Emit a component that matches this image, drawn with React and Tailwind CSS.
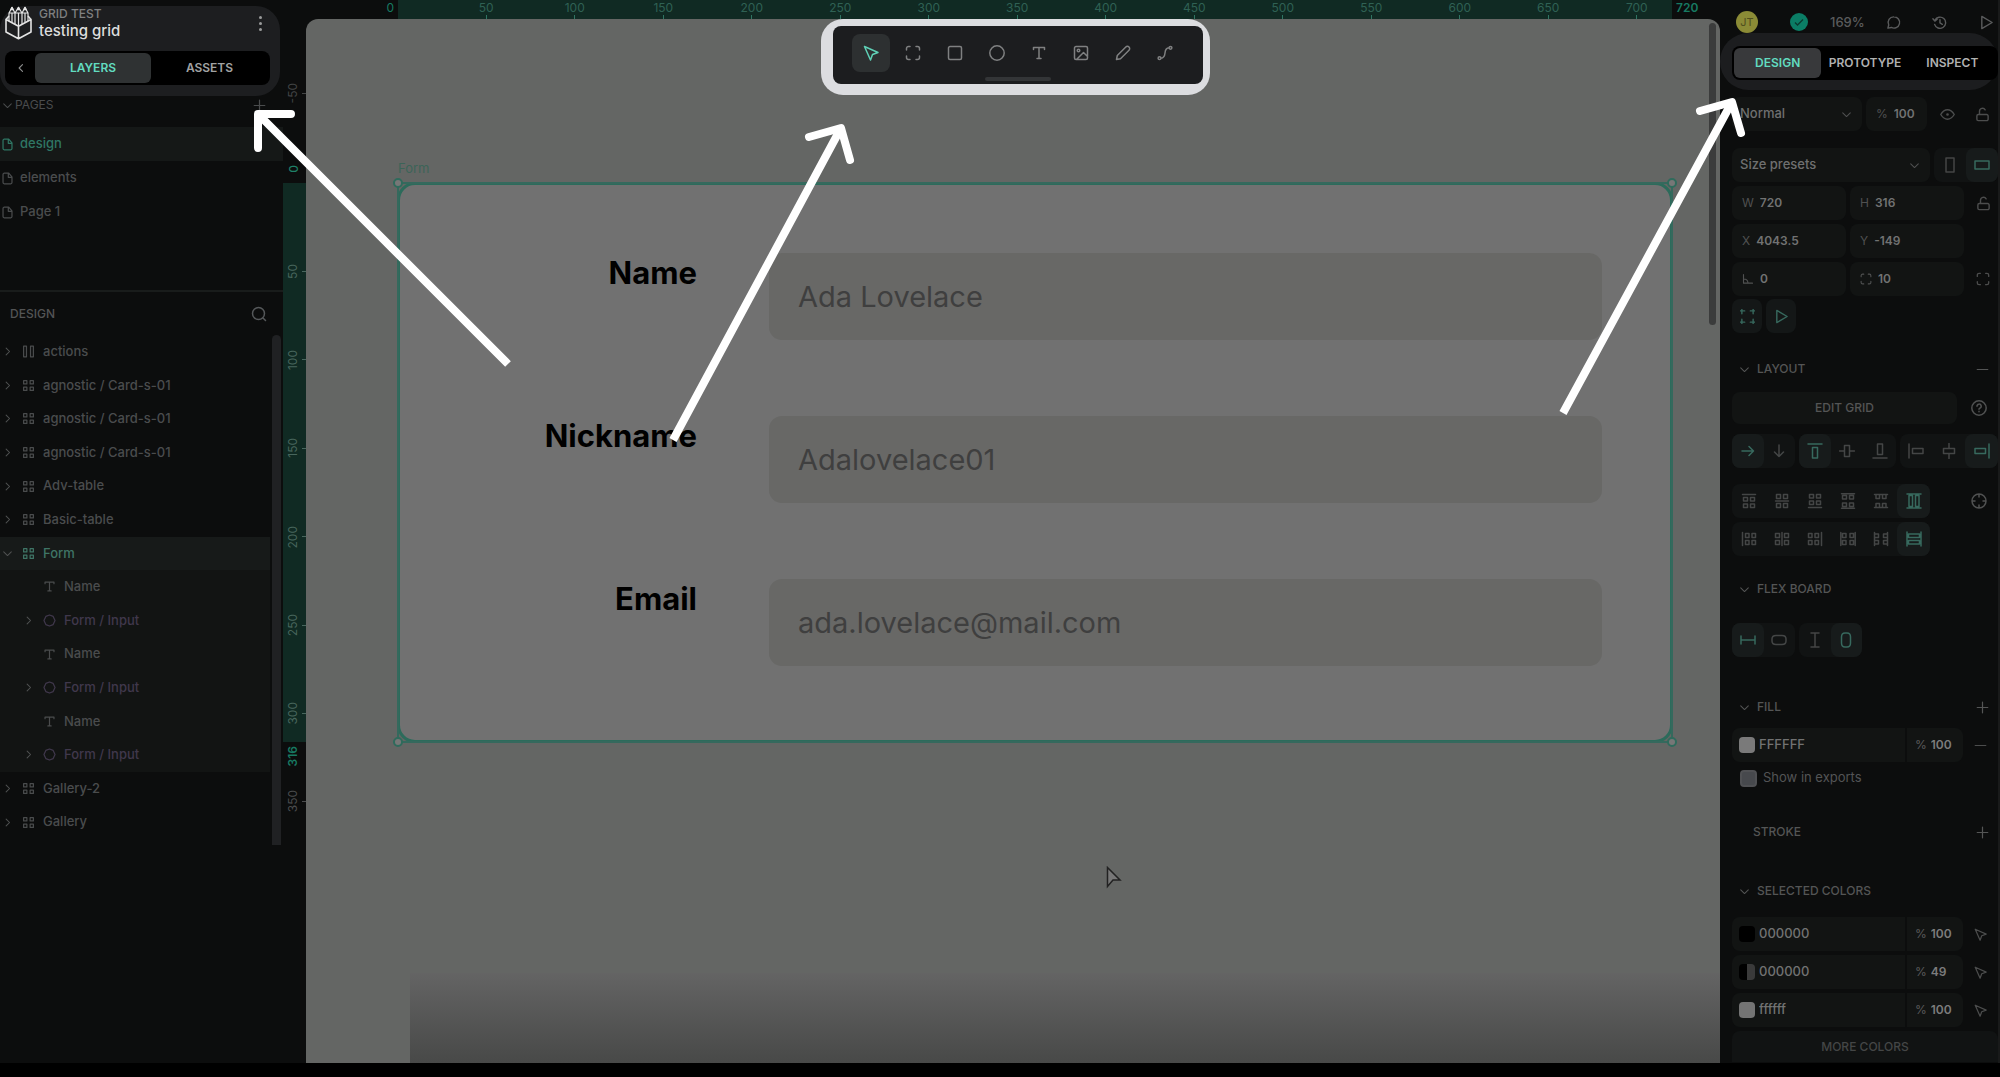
import { useState } from 'react';
import clsx from 'clsx';

const PATHS = {
  chevronLeft: 'M10 3.5 5.5 8l4.5 4.5',
  chevronRight: 'M6 3 11 8 6 13',
  chevronDown: 'M2.5 5.5 8 11l5.500-5.500',
  plus: 'M8 1.5v13M1.5 8h13',
  minus: 'M1.5 8h13',
  search: 'M7.5 1.5a6 6 0 1 0 0 12 6 6 0 0 0 0-12zM12 12l2.5 2.5',
  page: 'M9.5 1.5H4A1.5 1.5 0 0 0 2.5 3v10A1.5 1.5 0 0 0 4 14.5h8a1.5 1.5 0 0 0 1.5-1.5V6zM9 1.5V6.5h4.5',
  columns: 'M2 1.5h3.5v13H2zM10.5 1.5H14v13h-3.5z',
  grid: 'M2 2h4v4H2zM10 2h4v4h-4zM2 10h4v4H2zM10 10h4v4h-4z',
  text: 'M2.5 4.5v-2h11v2M8 2.5v11M6 13.5h4',
  component: 'M8 1.2 12.5 3 14.8 8 12.5 13 8 14.8 3.5 13 1.2 8 3.5 3z',
  move: 'M1.5 1.5 15 7.5 9.5 9.5 7.5 15z',
  board: 'M5 1.5H3.5a2 2 0 0 0-2 2V5M11 1.5h1.5a2 2 0 0 1 2 2V5M14.5 11v1.5a2 2 0 0 1-2 2H11M5 14.5H3.5a2 2 0 0 1-2-2V11',
  rect: 'M3 1.5h10A1.5 1.5 0 0 1 14.5 3v10a1.5 1.5 0 0 1-1.5 1.5H3A1.5 1.5 0 0 1 1.5 13V3A1.5 1.5 0 0 1 3 1.5z',
  ellipse: 'M8 .8a7.2 7.2 0 1 0 0 14.4A7.2 7.2 0 0 0 8 .8z',
  image: 'M3 1.5h10A1.5 1.5 0 0 1 14.5 3v10a1.5 1.5 0 0 1-1.5 1.5H3A1.5 1.5 0 0 1 1.5 13V3A1.5 1.5 0 0 1 3 1.5zM5.5 4.2a1.3 1.3 0 1 0 0 2.6 1.3 1.3 0 0 0 0-2.6zM3.5 14.5 10.5 7.5l4 4',
  pencil: 'M1.5 14.5l.8-4L10.8 2a2.2 2.2 0 0 1 3.2 3.2l-8.5 8.5z',
  path: 'M2.5 11.8a1.4 1.4 0 1 0 0 2.8 1.4 1.4 0 0 0 0-2.8zM13.5 1.4a1.4 1.4 0 1 0 0 2.8 1.4 1.4 0 0 0 0-2.8zM4 13.2C11 13 5 3 12 2.8',
  comment: 'M8.5 2a6 6 0 1 1-2.8 11.3L2 14l.9-3.3A6 6 0 0 1 8.5 2z',
  history: 'M3.2 5.5A6 6 0 1 1 2.8 10M1 4l2 2.5L5.5 4.5M8.5 5v3.5l2.5 1.5',
  play: 'M3 1.5 14 8 3 14.5z',
  eye: 'M.8 8C3 4.5 5.3 3 8 3s5 1.5 7.2 5C13 11.5 10.7 13 8 13S3 11.5.8 8zM8 7.3a.7.7 0 1 0 0 1.4.7.7 0 0 0 0-1.4z',
  unlock: 'M3.5 8h9A1.5 1.5 0 0 1 14 9.5v3.5a1.5 1.5 0 0 1-1.5 1.5h-9A1.5 1.5 0 0 1 2 13V9.5A1.5 1.5 0 0 1 3.5 8zM4.8 8V4.5a3.2 3.2 0 0 1 6-1.5',
  portrait: 'M4 1h8v14H4z',
  landscape: 'M1 4h14v8H1z',
  angle: 'M2 2v11.5h12M2.5 8c3 0 5 2 5.5 5',
  fit: 'M2 5V2h3M11 2h3v3M14 11v3h-3M5 14H2v-3M.5 2h1M2 .5v1M14.5 2h1M14 .5v1M.5 14h1M2 14.5v1M14.5 14h1M14 14.5v1',
  right: 'M2 8h11.5M9 3.5 13.5 8 9 12.5',
  down: 'M8 2v11.5M3.5 9 8 13.5 12.5 9',
  alignTop: 'M1 1h14M5.5 4.5h5v10.5h-5z',
  alignMiddle: 'M.5 8h5M10.5 8h5M5.5 2.5h5v11h-5z',
  alignBottom: 'M1 15h14M5.5 1h5v10.5h-5z',
  help: 'M8 .8a7.2 7.2 0 1 0 0 14.4A7.2 7.2 0 0 0 8 .8zM6 6.3A2.1 2.1 0 1 1 8.8 8.2Q8 8.6 8 9.3M8 11.2v.6',
  locate: 'M8 1a7 7 0 1 0 0 14A7 7 0 0 0 8 1zM8 1v3M8 12v3M1 8h3M12 8h3',
  fixWidth: 'M1 4v8M15 4v8M1 8h14',
  fitWidth: 'M5 3.5h6q4 0 4 3.5v2q0 3.500-4 3.500H5Q1 12.500 1 9V7q0-3.500 4-3.500z',
  packStart: 'M1.5 1.5h13M2.5 4.5h4v3.5h-4zM9.5 4.5h4v3.5h-4zM2.5 11h4v3.5h-4zM9.5 11h4v3.5h-4z',
  packCenter: 'M1.5 8h13M2.5 1.5h4v4h-4zM9.5 1.5h4v4h-4zM2.5 10.5h4v4h-4zM9.5 10.5h4v4h-4z',
  packEnd: 'M1.5 14.5h13M2.5 1.5h4v3.5h-4zM9.5 1.5h4v3.5h-4zM2.5 8h4v3.5h-4zM9.5 8h4v3.5h-4z',
  packBetween: 'M1.5.8h13M1.5 15.2h13M2.5 2.5h4v3.5h-4zM9.5 2.5h4v3.5h-4zM2.5 10h4v3.5h-4zM9.5 10h4v3.5h-4z',
  packAround: 'M1.5 1.5h13M1.5 14.5h13M3 1.5v4h3.5v-4M9.5 1.5v4H13v-4M3 14.5v-4h3.5v4M9.5 14.5v-4H13v4',
  packStretch: 'M1 1h14M1 15h14M3 2.5h3.5v11H3zM9.5 2.5H13v11H9.5z',
};

function Icon({ name, size = 16, flip = false, className }) {
  return (
    <svg
      width={size}
      height={size}
      viewBox="0 0 16 16"
      fill="none"
      stroke="currentColor"
      strokeWidth="1.5"
      strokeLinecap="round"
      strokeLinejoin="round"
      className={clsx('shrink-0', className)}
      aria-hidden="true"
    >
      {/* flip swaps the axes, for the horizontal twin of an icon */}
      <path d={PATHS[name]} transform={flip ? 'matrix(0 1 1 0 0 0)' : undefined} />
    </svg>
  );
}

const pages = ['design', 'elements', 'Page 1'];

const layers = [
  { name: 'actions', icon: 'columns' },
  { name: 'agnostic / Card-s-01', icon: 'grid' },
  { name: 'agnostic / Card-s-01', icon: 'grid' },
  { name: 'agnostic / Card-s-01', icon: 'grid' },
  { name: 'Adv-table', icon: 'grid' },
  { name: 'Basic-table', icon: 'grid' },
  { name: 'Form', icon: 'grid', selected: true },
  { name: 'Name', icon: 'text', child: true },
  { name: 'Form / Input', icon: 'component', child: true },
  { name: 'Name', icon: 'text', child: true },
  { name: 'Form / Input', icon: 'component', child: true },
  { name: 'Name', icon: 'text', child: true },
  { name: 'Form / Input', icon: 'component', child: true },
  { name: 'Gallery-2', icon: 'grid' },
  { name: 'Gallery', icon: 'grid' },
];

const tools = ['move', 'board', 'rect', 'ellipse', 'text', 'image', 'pencil', 'path'];

const rulerX = [50, 100, 150, 200, 250, 300, 350, 400, 450, 500, 550, 600, 650, 700];
const rulerY = [50, 100, 150, 200, 250, 300];

const formFields = [
  { id: 'name', label: 'Name', value: 'Ada Lovelace' },
  { id: 'nickname', label: 'Nickname', value: 'Adalovelace01' },
  { id: 'email', label: 'Email', value: 'ada.lovelace@mail.com' },
];

const selectedColors = [
  { hex: '000000', opacity: '100', swatch: 'bg-black' },
  { hex: '000000', opacity: '49', swatch: 'bg-linear-to-r from-black from-50% to-[#3a3a3a] to-50%' },
  { hex: 'ffffff', opacity: '100', swatch: 'bg-[#747474]' },
];

function Logo() {
  return (
    <svg width="28" height="34" viewBox="0 0 28 34" fill="none" stroke="#e4e4e4" strokeWidth="1.6" strokeLinejoin="round" aria-label="Penpot">
      <path d="M1 13.5v12.5l12.5 6.8L26 26V13.5l-12.5 6.7zM13.5 20.2v12.6" />
      <path d="M1 13.5l3-3.5M26 13.5l-3-3.5" />
      <path d="M4 15V7l3-5.5L10 7v11M10 7l3.5-5.5L17 7v11M17 7l3-5.5L23 7v8M4 7h19M7 7v9.5M13.5 7v13M20 7v9.5" strokeWidth="1.2" />
      <path d="M6 3.5 7 1.5l1 2zM12.5 3.5l1-2 1 2zM19 3.5l1-2 1 2z" fill="#e4e4e4" />
    </svg>
  );
}

function LayerRow({ layer }) {
  const { name, icon, selected, child } = layer;
  const isComponent = icon === 'component';
  return (
    <li
      className={clsx(
        'flex min-h-0 flex-1 text-[13px] font-medium',
        selected && 'bg-[#171a19] text-[#3f7566]',
        child && 'bg-[#121413] pl-[21px]',
        isComponent ? 'text-[#40384c]' : !selected && 'text-[#4a4c4d]'
      )}
    >
      <button className="flex flex-1 items-center text-left">
        <span className="flex w-[15px] justify-center text-[#505252]">
          {icon !== 'text' && <Icon name={selected ? 'chevronDown' : 'chevronRight'} size={11} />}
        </span>
        <span className="flex w-[26px] justify-center">
          <Icon name={icon} size={13} />
        </span>
        <span className="ml-0.5">{name}</span>
      </button>
    </li>
  );
}

function LeftPanel() {
  const [tab, setTab] = useState('layers');
  return (
    <aside className="flex w-[283px] shrink-0 flex-col bg-[#0c0d0d]">
      <header className="mt-1.5 mr-[3px] h-[90px] rounded-[24px] bg-[#1d1e20] pr-2.5 pl-[5px]">
        <div className="flex h-[45px] items-start">
          <Logo />
          <div className="ml-1.5 flex-1">
            <p className="text-xs leading-[15px] font-medium text-[#7f8081]">GRID TEST</p>
            <h1 className="text-[15px] leading-5 font-medium text-[#dcdddd]">testing grid</h1>
          </div>
          <button className="mt-2.5 mr-1 flex flex-col items-center gap-[3px] px-1 text-[#9a9b9b]" aria-label="Menu">
            <span className="size-[3px] rounded-full bg-current"></span>
            <span className="size-[3px] rounded-full bg-current"></span>
            <span className="size-[3px] rounded-full bg-current"></span>
          </button>
        </div>
        <div className="flex h-[34px] items-stretch rounded-lg bg-black p-0.5 text-xs font-semibold">
          <button className="flex w-7 items-center justify-center text-[#8c8d8d]" aria-label="Collapse">
            <Icon name="chevronLeft" size={12} />
          </button>
          <button
            onClick={() => setTab('layers')}
            className={clsx('w-[116px] rounded-md', tab === 'layers' ? 'bg-[#2f3233] text-[#62dcc0]' : 'text-[#a2a3a3]')}
          >
            LAYERS
          </button>
          <button
            onClick={() => setTab('assets')}
            className={clsx('flex-1 rounded-md', tab === 'assets' ? 'bg-[#2f3233] text-[#62dcc0]' : 'text-[#a2a3a3]')}
          >
            ASSETS
          </button>
        </div>
      </header>

      {/* Pages */}
      <section className="flex h-[196px] flex-col border-b-2 border-[#191c1b] text-[#4a4c4d]">
        <div className="flex h-[31px] items-start justify-between pr-[17px] pl-0.5">
          <button className="flex h-[18px] items-center gap-0.5 text-xs">
            <Icon name="chevronDown" size={11} />
            PAGES
          </button>
          <button className="flex h-[18px] items-center" aria-label="Add page">
            <Icon name="plus" size={13} />
          </button>
        </div>
        <ul>
          {pages.map((page, i) => (
            <li key={page} className={i === 0 ? 'bg-[#151817] text-[#2f7664]' : ''}>
              <button className="flex h-[34px] w-full items-center gap-1.5 pl-px text-[13px] font-medium">
                <Icon name="page" size={13} />
                {page}
              </button>
            </li>
          ))}
        </ul>
      </section>

      {/* Layers */}
      <div className="flex h-[43px] shrink-0 items-center justify-between pr-4 pl-2.5 text-[#535455]">
        <h2 className="text-xs font-medium">DESIGN</h2>
        <button aria-label="Search layers" className="text-[#55585a]">
          <Icon name="search" size={16} />
        </button>
      </div>
      <div className="flex">
        <ul className="flex h-[504px] flex-1 flex-col">
          {layers.map((layer, i) => (
            <LayerRow key={i} layer={layer} />
          ))}
        </ul>
        <div className="mx-0.5 h-[510px] w-[9px] rounded-t-full bg-[#202123]"></div>
      </div>
    </aside>
  );
}

function Ruler() {
  return (
    <div className="flex h-[19px] text-xs leading-[15px] text-[#2f6154]">
      <div className="w-[115px] pr-1 text-right text-[#177a62]">0</div>
      <div className="flex flex-1 bg-[#102a23] pl-11">
        <div className="-mr-[9px] flex flex-1">
          {rulerX.map((mark) => (
            <div key={mark} className="flex flex-1 flex-col items-center">
              {mark}
              <span className="h-1 w-px bg-[#2f7563]"></span>
            </div>
          ))}
        </div>
      </div>
      <div className="w-12 pl-1 font-semibold text-[#177a62]">720</div>
    </div>
  );
}

function SideRuler() {
  return (
    <div className="flex w-[23px] shrink-0 flex-col text-xs leading-[14px] text-[#48665d]">
      <div className="flex h-[164px] flex-col items-center justify-between pt-16 pb-2.5">
        <div className="flex w-full items-center justify-between pl-[3px] text-[#434546]">
          <span className="rotate-180 [writing-mode:vertical-rl]">-50</span>
          <span className="h-px w-1 bg-current"></span>
        </div>
        <span className="-ml-0.5 rotate-180 font-medium text-[#1f8068] [writing-mode:vertical-rl]">0</span>
      </div>
      <div className="h-[559px] bg-[#102a23] pt-11">
        <div className="flex h-[531px] flex-col">
          {rulerY.map((mark) => (
            <div key={mark} className="flex flex-1 items-center justify-between pl-[3px]">
              <span className="rotate-180 [writing-mode:vertical-rl]">{mark}</span>
              <span className="h-px w-1 bg-current"></span>
            </div>
          ))}
        </div>
      </div>
      <span className="mt-1 ml-[3px] w-[14px] rotate-180 font-semibold text-[#177a62] [writing-mode:vertical-rl]">316</span>
      <div className="mt-6 flex items-center justify-between pl-[3px] text-[#4a4c4d]">
        <span className="rotate-180 [writing-mode:vertical-rl]">350</span>
        <span className="h-px w-1 bg-current"></span>
      </div>
    </div>
  );
}

function Toolbar() {
  const [active, setActive] = useState('move');
  return (
    <div className="absolute top-0 left-[515px] rounded-[22px] bg-[#dcdde0] pt-[7px] pr-[7px] pb-[11px] pl-3">
      <div className="flex h-[58px] w-[370px] flex-col items-center rounded-lg bg-[#1c1d1f] pt-2">
        <div className="flex gap-1">
          {tools.map((tool) => (
            <button
              key={tool}
              aria-label={tool}
              onClick={() => setActive(tool)}
              className={clsx(
                'flex size-[38px] items-center justify-center rounded-lg',
                tool === active ? 'bg-[#2d3031] text-[#5fd0b6]' : 'text-[#7f8081]'
              )}
            >
              <Icon name={tool} size={16} />
            </button>
          ))}
        </div>
        <div className="mt-[5px] h-1 w-[66px] rounded-full bg-[#333537]"></div>
      </div>
    </div>
  );
}

function Handle({ className }) {
  return <span className={clsx('absolute size-2.5 rounded-full border-2 border-[#2f6b5c] bg-[#777]', className)}></span>;
}

function Canvas() {
  return (
    <div className="relative flex flex-1 flex-col overflow-hidden rounded-t-xl bg-[#646664]">
      <div className="mt-[140px] mr-[47px] ml-[91px]">
        <p className="mb-[5px] pl-px text-[13px] leading-[18px] text-[#3c6458]">Form</p>
        <div className="relative h-[561px]">
          <div className="h-full rounded-[18px] border-[3px] border-[#2c6b5b] bg-[#717171] pt-[68px] pr-[68px]">
            {formFields.map((field) => (
              <div key={field.id} className="mb-19 flex items-start">
                <label htmlFor={field.id} className="mr-18 w-[297px] text-right text-[31px] leading-10 font-bold text-black">
                  {field.label}
                </label>
                <input
                  id={field.id}
                  defaultValue={field.value}
                  className="h-[87px] min-w-0 flex-1 rounded-[13px] bg-[#686866] px-[29px] text-[29px] text-[#3f3f3f]"
                />
              </div>
            ))}
          </div>
          <div className="pointer-events-none absolute inset-0 border-2 border-[#35695d]"></div>
          <Handle className="-top-1 -left-1" />
          <Handle className="-top-1 -right-1" />
          <Handle className="-bottom-1 -left-1" />
          <Handle className="-right-1 -bottom-1" />
        </div>
      </div>
      <div className="mt-auto ml-[104px] h-[90px] bg-linear-to-b from-[#646464] to-[#484948]"></div>

      {/* Scrollbar */}
      <div className="absolute top-1 right-1 h-[302px] w-[7px] rounded-full bg-[#3b3c3c]"></div>

      <Toolbar />

      <svg className="absolute top-[847px] left-[800px]" width="16" height="24" viewBox="0 0 16 24" fill="#777" stroke="#222" strokeWidth="1.5" aria-hidden="true">
        <path d="M1.5 1.5 14 14H7L1.5 20.5z" />
      </svg>
    </div>
  );
}

function Field({ label, icon, value, className }) {
  return (
    <label className={clsx('flex h-[34px] items-center gap-1.5 rounded-lg bg-[#121413] px-2.5', className)}>
      <span className="text-xs text-[#505151]">{icon ? <Icon name={icon} size={12} /> : label}</span>
      <input
        defaultValue={value}
        aria-label={label}
        className="w-full min-w-0 bg-transparent text-xs font-semibold text-[#717272]"
      />
    </label>
  );
}

function SelectField({ value, className }) {
  return (
    <div className={clsx('relative flex h-[34px] items-center rounded-lg bg-[#121413]', className)}>
      <select aria-label={value} className="w-full appearance-none bg-transparent px-2 text-[13px] font-medium text-[#6f7070]">
        <option>{value}</option>
      </select>
      <Icon name="chevronDown" size={11} className="pointer-events-none absolute right-2.5 text-[#505151]" />
    </div>
  );
}

function IconButton({ name, className, size = 15 }) {
  return (
    <button aria-label={name} className={clsx('flex h-[34px] items-center justify-center text-[#4c4d4d]', className)}>
      <Icon name={name} size={size} />
    </button>
  );
}

function ButtonGroup({ icons, active, flip = false, className }) {
  return (
    <div className={clsx('flex h-[34px] rounded-lg bg-[#111313]', className)}>
      {icons.map((icon) => {
        const [name, turned] = icon.split(':');
        return (
          <button
            key={icon}
            aria-label={icon}
            className={clsx(
              'flex flex-1 items-center justify-center rounded-lg',
              icon === active ? 'bg-[#171b1b] text-[#37695e]' : 'text-[#444646]'
            )}
          >
            <Icon name={name} size={16} flip={flip || turned === 'h'} />
          </button>
        );
      })}
    </div>
  );
}

function SectionTitle({ title, action, className }) {
  return (
    <div className={clsx('flex h-8 items-center pl-[7px] text-[#545555]', className)}>
      {title !== 'STROKE' && <Icon name="chevronDown" size={11} className="mr-[7px]" />}
      <h3 className={clsx('flex-1 text-xs font-medium', title === 'STROKE' && 'pl-3.5')}>{title}</h3>
      {action && (
        <button aria-label={action} className="mr-[9px]">
          <Icon name={action} size={13} />
        </button>
      )}
    </div>
  );
}

function ColorRow({ hex, opacity, swatch, action, className }) {
  return (
    <div className={clsx('flex', className)}>
      <div className="flex h-[34px] w-[173px] items-center rounded-l-lg bg-[#121413] pl-[7px]">
        <span className={clsx('size-4 shrink-0 rounded-sm', swatch)}></span>
        <input
          defaultValue={hex}
          aria-label="Color"
          className="ml-1 w-full min-w-0 bg-transparent text-[13px] font-medium text-[#717272]"
        />
      </div>
      <label className="ml-0.5 flex h-[34px] w-14 items-center gap-1 rounded-r-lg bg-[#121413] pl-2 text-xs text-[#5a5b5b]">
        %
        <input
          defaultValue={opacity}
          aria-label="Opacity"
          className="w-full min-w-0 bg-transparent text-xs font-semibold text-[#7c7c7c]"
        />
      </label>
      <IconButton name={action} className="flex-1" size={13} />
    </div>
  );
}

function RightPanel() {
  const [tab, setTab] = useState('DESIGN');
  return (
    <aside className="flex w-[280px] shrink-0 flex-col border-r-2 border-[#191a1a] bg-[#0c0d0d]">
      <div className="flex h-[33px] items-end pr-1 pl-4 text-[#5a5b5c]">
        <span className="flex size-[22px] items-center justify-center rounded-full bg-[#8b8b36] text-[11px] text-[#4f4f1e]">JT</span>
        <span className="mb-0.5 ml-8 flex size-[18px] items-center justify-center rounded-full bg-[#0b7d65] text-[#0b3a30]">
          <svg width="10" height="10" viewBox="0 0 10 10" fill="none" stroke="currentColor" strokeWidth="1.3" aria-hidden="true">
            <path d="M1 5.5 3.5 8 9 2.5" />
          </svg>
        </span>
        <span className="mb-0.5 ml-[22px] text-[13px] leading-[18px] font-medium">169%</span>
        <div className="mb-[3px] flex flex-1 justify-between pl-[21px]">
          <Icon name="comment" size={15} />
          <Icon name="history" size={15} />
          <Icon name="play" size={15} />
        </div>
      </div>

      <div className="flex h-[57px] items-center rounded-full bg-[#1c1d1f] pl-3">
        <div className="mt-0.5 flex h-[34px] flex-1 rounded-lg bg-black p-0.5 text-xs font-semibold">
          {['DESIGN', 'PROTOTYPE', 'INSPECT'].map((name) => (
            <button
              key={name}
              onClick={() => setTab(name)}
              className={clsx('flex-1 rounded-md', tab === name ? 'bg-[#38393b] text-[#62dcc0]' : 'text-[#b0b1b1]')}
            >
              {name}
            </button>
          ))}
        </div>
      </div>

      <div className="flex flex-col pl-3">
        {/* Size and position */}
        <div className="mt-[7px] flex gap-1">
          <SelectField value="Normal" className="w-[130px]" />
          <Field label="%" value="100" className="w-[61px]" />
          <IconButton name="eye" className="w-8" />
          <IconButton name="unlock" className="flex-1" />
        </div>
        <div className="mt-[17px] flex gap-1">
          <SelectField value="Size presets" className="w-[198px]" />
          <ButtonGroup icons={['portrait', 'landscape']} active="landscape" className="flex-1" />
        </div>
        <div className="mt-1 flex gap-1">
          <Field label="W" value="720" className="w-[114px]" />
          <Field label="H" value="316" className="w-[114px]" />
          <IconButton name="unlock" className="flex-1" />
        </div>
        <div className="mt-1 flex gap-1">
          <Field label="X" value="4043.5" className="w-[114px]" />
          <Field label="Y" value="-149" className="w-[114px]" />
        </div>
        <div className="mt-1 flex gap-1">
          <Field label="Rotation" icon="angle" value="0" className="w-[114px]" />
          <Field label="Radius" icon="board" value="10" className="w-[114px]" />
          <IconButton name="board" className="flex-1" size={14} />
        </div>
        <div className="mt-[3px] flex gap-1">
          <IconButton name="fit" className="w-[30px] rounded-lg bg-[#141717] !text-[#37695e]" />
          <IconButton name="play" className="w-[30px] rounded-lg bg-[#141717] !text-[#37695e]" />
        </div>

        {/* Layout */}
        <SectionTitle title="LAYOUT" action="minus" className="mt-5" />
        <div className="mt-[7px] flex h-8 items-center">
          <button className="h-8 w-[225px] rounded-lg bg-[#121413] text-xs font-medium text-[#545555]">EDIT GRID</button>
          <button aria-label="Help" className="ml-3.5 text-[#505151]">
            <Icon name="help" size={16} />
          </button>
        </div>
        <div className="mt-2.5 flex gap-1">
          <ButtonGroup icons={['right', 'down']} active="right" className="w-[63px]" />
          <ButtonGroup icons={['alignTop', 'alignMiddle', 'alignBottom']} active="alignTop" className="w-[97px]" />
          <ButtonGroup icons={['alignTop:h', 'alignMiddle:h', 'alignBottom:h']} active="alignBottom:h" className="flex-1" />
        </div>
        <div className="mt-4 flex items-center">
          <ButtonGroup
            icons={['packStart', 'packCenter', 'packEnd', 'packBetween', 'packAround', 'packStretch']}
            active="packStretch"
            className="w-[198px]"
          />
          <button aria-label="Locate" className="ml-[41px] text-[#505151]">
            <Icon name="locate" size={16} />
          </button>
        </div>
        <ButtonGroup
          icons={['packStart', 'packCenter', 'packEnd', 'packBetween', 'packAround', 'packStretch']}
          active="packStretch"
          flip
          className="mt-1 w-[198px]"
        />

        {/* Flex board */}
        <SectionTitle title="FLEX BOARD" className="mt-[17px]" />
        <div className="mt-[18px] flex gap-1">
          <ButtonGroup icons={['fixWidth', 'fitWidth']} active="fixWidth" className="w-[63px]" />
          <ButtonGroup icons={['fixWidth:h', 'fitWidth:h']} active="fitWidth:h" className="w-[63px]" />
        </div>

        {/* Fill */}
        <SectionTitle title="FILL" action="plus" className="mt-[34px]" />
        <ColorRow hex="FFFFFF" opacity="100" swatch="bg-[#7a7a7a]" action="minus" className="mt-[5px]" />
        <label className="mt-1 flex h-6 items-center gap-1.5 pl-2 text-[13px] text-[#535455]">
          <input type="checkbox" className="size-[17px] appearance-none rounded-sm border-2 border-[#505154] bg-[#47494d]" />
          Show in exports
        </label>

        <SectionTitle title="STROKE" action="plus" className="mt-[26px]" />

        {/* Selected colors */}
        <SectionTitle title="SELECTED COLORS" className="mt-[27px]" />
        <div className="mt-2.5 flex flex-col gap-1">
          {selectedColors.map((color, i) => (
            <ColorRow key={i} {...color} action="move" />
          ))}
          <button className="h-[31px] rounded-t-lg bg-[#111313] text-xs font-medium text-[#444646]">MORE COLORS</button>
        </div>
      </div>
    </aside>
  );
}

function Arrows() {
  return (
    <svg className="pointer-events-none absolute inset-0 h-full w-full" fill="none" stroke="#fff" strokeWidth="8" strokeLinejoin="round" aria-hidden="true">
      <path d="M508 364 259 115M673 440 841 128M1563 413 1732 102" />
      <path d="M291 114H258v34M809 137l32-9 9 32M1700 111l32-9 9 31" strokeLinecap="round" />
    </svg>
  );
}

function App() {
  return (
    <div className="relative flex min-h-screen overflow-hidden bg-black pb-3.5 font-[Inter,'Liberation_Sans',sans-serif]">
      <LeftPanel />
      <main className="flex min-w-0 flex-1 flex-col bg-[#0c0d0d]">
        <Ruler />
        <div className="flex flex-1">
          <SideRuler />
          <Canvas />
        </div>
      </main>
      <RightPanel />
      <Arrows />
    </div>
  );
}

export default App;
